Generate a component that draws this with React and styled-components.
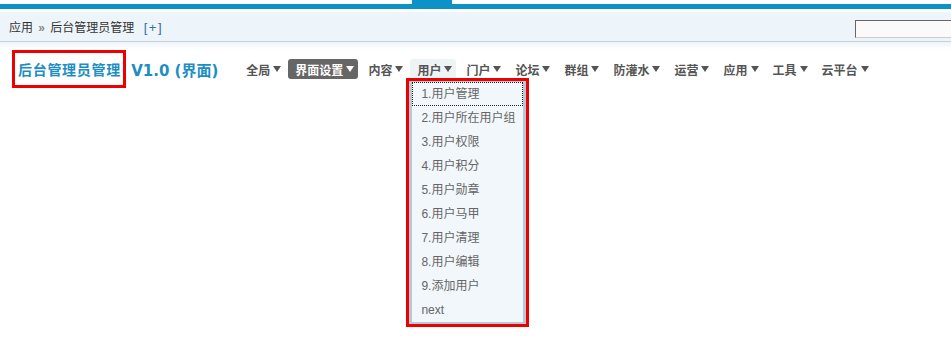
import styled, { createGlobalStyle } from 'styled-components';

const GlobalStyle = createGlobalStyle`
  body {
    margin: 0;
    background: #fff;
    font-family: "Liberation Sans", "Noto Sans CJK SC", sans-serif;
    font-size: 12px;
    color: #333;
  }
`;

const navItems = ['全局', '界面设置', '内容', '用户', '门户', '论坛', '群组', '防灌水', '运营', '应用', '工具', '云平台'];
const userMenu = ['1.用户管理', '2.用户所在用户组', '3.用户权限', '4.用户积分', '5.用户勋章', '6.用户马甲', '7.用户清理', '8.用户编辑', '9.添加用户', 'next'];

const App = () => {
  return (
    <Page>
      <GlobalStyle />
      <TopStrip>
        <Tab />
      </TopStrip>
      <BlueLine />
      <Header>
        <Crumbs>
          应用 <Sep>»</Sep> 后台管理员管理 <AddLink>[+]</AddLink>
        </Crumbs>
        <Search />
      </Header>
      <HeaderFade />
      <MainRow>
        <Marked>
          <Title>后台管理员管理</Title>
        </Marked>
        <Version>V1.0 (界面)</Version>
        <Nav>
          {navItems.map((name) => (
            <NavItem key={name} $active={name === '界面设置'} $hover={name === '用户'}>
              {name}
              <Arrow />
              {name === '用户' && (
                <DropWrap>
                  <Menu>
                    {userMenu.map((item, i) => (
                      <MenuItem key={item} $focus={i === 0}>{item}</MenuItem>
                    ))}
                  </Menu>
                </DropWrap>
              )}
            </NavItem>
          ))}
        </Nav>
      </MainRow>
    </Page>
  );
};

const Page = styled.div`
  width: 951px;
  height: 356px;
  overflow: hidden;
`;

const TopStrip = styled.div`
  height: 4px;
  display: flex;
`;

const Tab = styled.div`
  margin-left: 412px;
  width: 40px;
  background: #0b92c6;
`;

const BlueLine = styled.div`
  height: 5px;
  background: #0b92c6;
  border-bottom: 3px solid #fff;
`;

const Header = styled.div`
  height: 29px;
  background: #eef5fa;
  border-bottom: 1px solid #c3d1da;
  display: flex;
  align-items: center;
  justify-content: space-between;
`;

const Crumbs = styled.div`
  padding-left: 9px;
  font-size: 12px;
  color: #333;
  white-space: nowrap;
`;

const Sep = styled.span`
  color: #888;
  font-size: 12px;
  font-weight: bold;
  margin: 0 2px;
`;

const AddLink = styled.span`
  color: #2f6ea8;
  margin-left: 6px;
  font-size: 13px;
  letter-spacing: 1.5px;
`;

const Search = styled.div`
  width: 100px;
  height: 16px;
  margin-top: 4px;
  margin-right: -6px;
  background: #fbf9f9;
  border: 1px solid #ccc;
  border-top-color: #666;
  border-left-color: #666;
  flex-shrink: 0;
`;

const HeaderFade = styled.div`
  height: 8px;
  background: linear-gradient(#eef5fa, #fff);
`;

const MainRow = styled.div`
  display: flex;
  align-items: center;
  padding-left: 12px;
`;

const Marked = styled.div`
  border: 3px solid #e00;
  height: 32px;
  padding: 0 3px;
  display: flex;
  align-items: center;
`;

const Title = styled.span`
  font-size: 14px;
  letter-spacing: 0.7px;
  margin-right: -0.7px;
  font-weight: bold;
  color: #1d8ec3;
  font-family: "Noto Sans CJK SC", sans-serif;
`;

const Version = styled.span`
  margin-left: 5px;
  font-size: 15px;
  font-weight: bold;
  color: #1d8ec3;
  font-family: "DejaVu Sans", "Noto Sans CJK SC", sans-serif;
  white-space: nowrap;
`;

const Nav = styled.div`
  display: flex;
  margin-left: 21px;
  gap: 3px;
`;

const NavItem = styled.div`
  position: relative;
  display: flex;
  align-items: center;
  flex-shrink: 0;
  height: 20px;
  padding: 0 4px 0 7px;
  border-radius: 3px;
  font-size: 12px;
  font-weight: bold;
  white-space: nowrap;
  color: ${(p) => (p.$active ? '#fff' : '#555')};
  background: ${(p) => (p.$active ? '#666' : p.$hover ? '#eef3f6' : 'transparent')};
  font-family: "Noto Sans CJK SC", sans-serif;
`;

const Arrow = styled.span`
  flex-shrink: 0;
  width: 0;
  height: 0;
  margin-left: 3px;
  border-left: 4px solid transparent;
  border-right: 4px solid transparent;
  border-top: 6px solid currentColor;
`;

const DropWrap = styled.div`
  position: absolute;
  top: 19px;
  left: -4px;
  border: 3px solid #e00;
  z-index: 2;
`;

const Menu = styled.div`
  width: 111px;
  background: #f1f7fb;
  border-style: solid;
  border-color: #b6cad5;
  border-width: 1px 3px 2px 3px;
`;

const MenuItem = styled.div`
  height: 24px;
  line-height: 24px;
  padding-left: 9px;
  font-size: 12px;
  font-weight: normal;
  color: #666;
  box-sizing: border-box;
  font-family: "Liberation Sans", "Noto Sans CJK SC", sans-serif;
  outline: ${(p) => (p.$focus ? '1px dotted #222' : 'none')};
  outline-offset: -1px;
`;

export default App;
